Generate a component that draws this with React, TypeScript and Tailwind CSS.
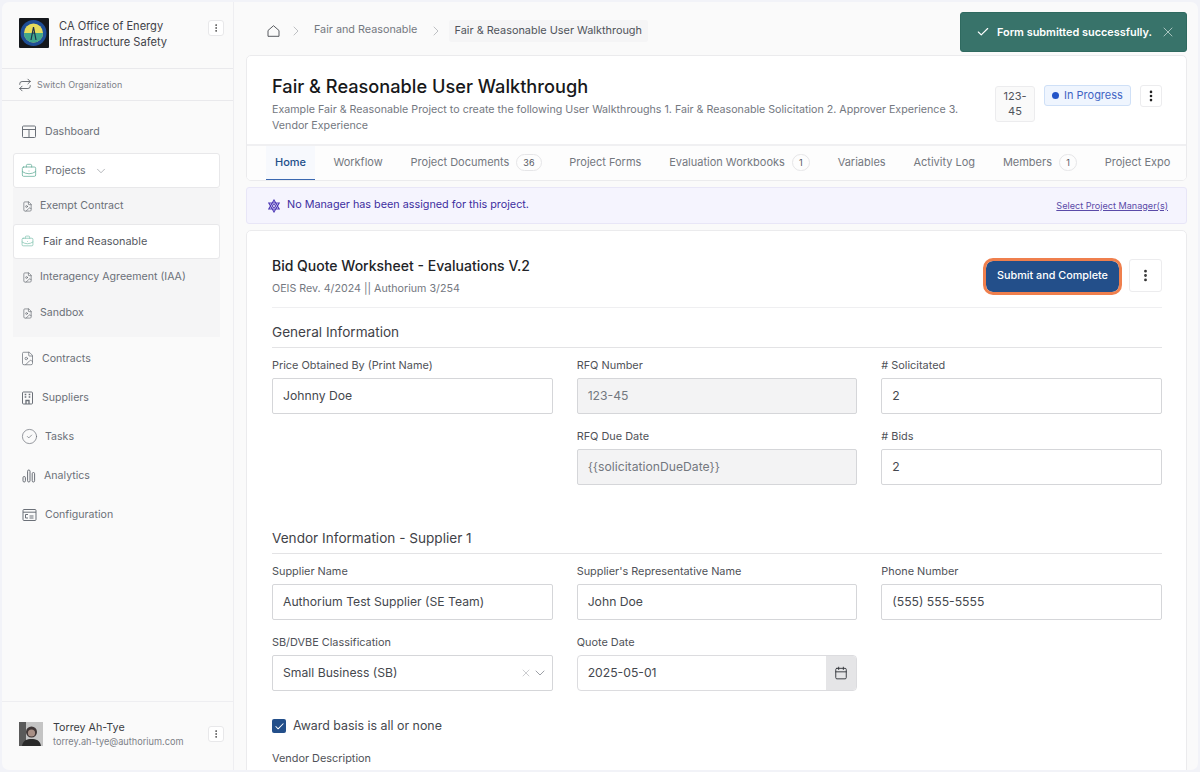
import React from "react";
import {
  BriefcaseBusiness,
  Calendar,
  Check,
  ChevronDown,
  ChevronRight,
  CircleCheck,
  EllipsisVertical,
  FileImage,
  Repeat,
  X,
} from "lucide-react";

const font = { fontFamily: "Inter, 'Liberation Sans', sans-serif" };

const MenuBox = () => (
  <div className="flex h-[16px] w-[16px] items-center justify-center rounded-[3px] border border-[#e8e8ea] bg-white">
    <EllipsisVertical size={10} className="text-[#444]" />
  </div>
);

const DashIcon = () => (
  <svg width="16" height="14" viewBox="0 0 16 14" fill="none" stroke="#6b7078" strokeWidth="1">
    <rect x="2.5" y="1" width="13" height="11.5" rx="1" />
    <path d="M2.5 4.500H15.500M9 4.500V12.500" />
  </svg>
);

const SupplierIcon = () => (
  <svg width="15" height="14" viewBox="0 0 15 14" fill="none" stroke="#6b7078" strokeWidth="1">
    <rect x="2.5" y="1" width="10" height="12" rx="1" />
    <path d="M4.700 3.500H6.300M8.700 3.500H10.300M4.700 6H6.300M8.700 6H10.300M6 13V9.500H9V13" strokeWidth="1.300" />
  </svg>
);

const BarsIcon = () => (
  <svg width="14" height="14" viewBox="0 0 14 14" fill="none" stroke="#6b7078" strokeWidth="1" className="ml-[1.5px]">
    <rect x="1" y="7.500" width="2.400" height="5.500" rx="1.200" />
    <rect x="5.600" y="1" width="2.400" height="12" rx="1.200" />
    <rect x="10.200" y="3.500" width="2.400" height="9.500" rx="1.200" />
  </svg>
);

const ConfigIcon = () => (
  <svg width="15" height="14" viewBox="0 0 15 14" fill="none" stroke="#6b7078" strokeWidth="1" className="ml-[1.5px]">
    <rect x="1" y="1.500" width="13" height="11" rx="1" />
    <path d="M1 4.200H14M3.500 6.500H6M3.500 6.500V10H6M7.500 8H11.500M7.500 10H11.500" />
  </svg>
);

const SubItem = ({ label }: { label: string }) => (
  <div className="flex h-[36px] items-center gap-[7px] pl-[9px] text-[10.6px] text-[#6b7078]">
    <FileImage size={11} strokeWidth={1.4} className="text-[#5f646c]" />
    {label}
  </div>
);

const NavItem = ({ icon, label, gap }: { icon: React.ReactNode; label: string; gap: string }) => (
  <div className={`flex h-[39px] items-center pl-[18px] text-[10.6px] text-[#6b7078] ${gap}`}>
    <span className="flex w-auto items-center">{icon}</span>
    {label}
  </div>
);

const Sidebar = () => (
  <aside className="flex w-[232px] shrink-0 flex-col border-r border-[#eeeef1] bg-[#fafafa]">
    <div className="flex h-[67px] items-start gap-[10px] border-b border-[#e9e9ec] pl-[17px] pr-[9px] pt-[16px]">
      <svg width="30" height="30" viewBox="0 0 30 30" className="shrink-0">
        <rect width="30" height="30" rx="1" fill="#15181c" />
        <circle cx="14.500" cy="15" r="13" fill="#1f4e96" />
        <circle cx="14.500" cy="15" r="9.500" fill="#e6dc5c" />
        <path d="M5 15h19a9.500 9.500 0 0 1-19 0z" fill="#3fa68c" />
        <path d="M12 22l2.500-13 2.500 13M12.800 15h3.400" stroke="#1a2f4a" strokeWidth="1.200" fill="none" />
      </svg>
      <div className="flex-1 pt-[1px] text-[11.1px] leading-[15.5px] text-[#3f4248]">
        CA Office of Energy
        <br />
        Infrastructure Safety
      </div>
      <div className="pt-[2px]">
        <MenuBox />
      </div>
    </div>
    <div className="flex h-[32px] items-center gap-[5px] border-b border-[#e9e9ec] pl-[16px] text-[9px] text-[#7d8188]">
      <Repeat size={14} strokeWidth={1.4} className="text-[#50545b]" />
      Switch Organization
    </div>
    <div className="flex flex-1 flex-col pt-[11px]">
      <NavItem icon={<DashIcon />} label="Dashboard" gap="gap-[9px]" />
      <div className="ml-[11px] mr-[13px] mt-[2px]">
        <div className="flex h-[35px] items-center gap-[8px] rounded-[3px] border border-[#e8e8ea] bg-white pl-[7px] text-[10.6px] text-[#6b7078]">
          <BriefcaseBusiness size={16} strokeWidth={1.1} className="text-[#5ba893]" />
          Projects
          <ChevronDown size={14} strokeWidth={1} className="text-[#808389]" />
        </div>
        <div className="bg-[#f5f5f6]">
          <SubItem label="Exempt Contract" />
          <div className="flex h-[35px] items-center gap-[9px] rounded-[3px] border border-[#e8e8ea] bg-white pl-[7px] text-[10.9px] text-[#55585f]">
            <BriefcaseBusiness size={13} strokeWidth={1.3} className="text-[#7cc0ad]" />
            Fair and Reasonable
          </div>
          <SubItem label="Interagency Agreement (IAA)" />
          <SubItem label="Sandbox" />
          <div className="h-[6px]" />
        </div>
      </div>
      <div className="h-[2px]" />
      <NavItem icon={<FileImage size={15} strokeWidth={1.2} />} label="Contracts" gap="gap-[7px]" />
      <NavItem icon={<SupplierIcon />} label="Suppliers" gap="gap-[7px]" />
      <NavItem icon={<CircleCheck size={17} strokeWidth={1} className="ml-[1px]" />} label="Tasks" gap="gap-[7px]" />
      <NavItem icon={<BarsIcon />} label="Analytics" gap="gap-[8.5px]" />
      <NavItem icon={<ConfigIcon />} label="Configuration" gap="gap-[8.5px]" />
    </div>
    <div className="flex h-[69px] items-center border-t border-[#eeeef1] pb-[4px] pl-[17px] pr-[9px]">
      <svg width="24" height="24" viewBox="0 0 24 24" className="shrink-0">
        <rect width="24" height="24" fill="#c4c4c4" />
        <rect width="7" height="24" fill="#5a5a5a" />
        <circle cx="12.500" cy="10" r="5.500" fill="#3f3636" />
        <circle cx="12.500" cy="11" r="3.600" fill="#a88f85" />
        <path d="M3 24c1-6 5-7 9.500-7s8.500 1 9.500 7z" fill="#2a2a2a" />
      </svg>
      <div className="ml-[10px] flex-1">
        <div className="text-[10.7px] leading-[14px] text-[#3a3d42]">Torrey Ah-Tye</div>
        <div className="text-[9.2px] leading-[13px] text-[#7d8188]">torrey.ah-tye@authorium.com</div>
      </div>
      <MenuBox />
    </div>
  </aside>
);

const Count = ({ n }: { n: string }) => (
  <span className="flex h-[17px] min-w-[18px] items-center justify-center rounded-full border border-[#e6e6e8] px-[6px] text-[9px] text-[#55585f]">
    {n}
  </span>
);

const Tab = ({ label, count, active }: { label: string; count?: string; active?: boolean }) => (
  <div
    className={`flex h-[34px] shrink-0 items-center gap-[7px] whitespace-nowrap border-b px-[9.5px] text-[11px] ${
      active ? "border-[#3a68b0] bg-[#f7f9fd] px-[9px] font-medium text-[#234f8a]" : "border-transparent text-[#74787f]"
    }`}
  >
    {label}
    {count && <Count n={count} />}
  </div>
);

const Field = ({ label, value, disabled }: { label: string; value: string; disabled?: boolean }) => (
  <div>
    <div className="mb-[6px] text-[10.9px] leading-[13px] text-[#4f5258]">{label}</div>
    <div
      className={`flex h-[36px] items-center rounded-[2px] border border-[#d5d6d9] px-[10px] text-[12.2px] ${
        disabled ? "bg-[#f3f3f4] text-[#74787f]" : "bg-white text-[#45484e]"
      }`}
    >
      {value}
    </div>
  </div>
);

const Section = ({ title }: { title: string }) => (
  <div className="border-b border-[#e3e3e5] pb-[5px] text-[13.6px] leading-[19px] text-[#3f4248]">{title}</div>
);

const Main = () => (
  <main className="relative min-w-0 flex-1 overflow-hidden bg-[#fafafa] pl-[12px] pr-[11px]">
    <div className="flex h-[53px] items-center pt-[4px] text-[10.8px] text-[#74787f]">
      <svg width="13" height="12" viewBox="0 0 13 12" fill="none" stroke="#45484e" strokeWidth="0.9" className="ml-[21px]">
        <path d="M1 5.500L6.500 0.700L12 5.500V11.300H1z" strokeLinejoin="round" />
      </svg>
      <ChevronRight size={16} strokeWidth={1} className="ml-[7.5px] text-[#a0a3a8]" />
      <span className="ml-[10.5px]">Fair and Reasonable</span>
      <ChevronRight size={16} strokeWidth={1} className="ml-[10.7px] text-[#a0a3a8]" />
      <span className="ml-[4.5px] flex h-[22px] items-center rounded-[3px] bg-[#f5f5f6] px-[6px] text-[10.9px] text-[#50545b]">
        Fair &amp; Reasonable User Walkthrough
      </span>
    </div>

    <section className="overflow-hidden rounded-[5px] border border-[#ebebed] bg-white">
      <div className="flex h-[90px] items-start border-b-2 border-[#f0f0f2] pl-[25px] pr-[24px] pt-[18px]">
        <div className="w-[700px]">
          <h1 className="text-[18.2px] font-medium leading-[24px] text-[#17181a]">Fair &amp; Reasonable User Walkthrough</h1>
          <p className="mt-[4px] text-[10.7px] leading-[15.5px] text-[#74787f]">
            Example Fair &amp; Reasonable Project to create the following User Walkthroughs 1. Fair &amp; Reasonable
            Solicitation 2. Approver Experience 3. Vendor Experience
          </p>
        </div>
        <div className="ml-auto mt-[11px] flex items-start">
          <div className="mt-[1px] flex h-[36px] w-[40px] items-center justify-center rounded-[3px] border border-[#ececee] bg-[#fafafa] text-center text-[11px] leading-[15.5px] text-[#50545b]">
            123-
            <br />
            45
          </div>
          <div className="ml-[9px] flex h-[21px] w-[87px] items-center gap-[5px] rounded-[3px] border border-[#cfe0f7] bg-[#eff5fe] pl-[7px] text-[11px] text-[#3f64c4]">
            <span className="h-[7px] w-[7px] rounded-full bg-[#2455c8]" />
            In Progress
          </div>
          <div className="ml-[9px] flex h-[22px] w-[22px] items-center justify-center rounded-[3px] border border-[#ececee] bg-white">
            <EllipsisVertical size={14} strokeWidth={2.5} className="text-[#222]" />
          </div>
        </div>
      </div>
      <div className="flex bg-[#fdfdfd] pl-[19px] [&>*+*]:ml-[8.8px]">
        <Tab label="Home" active />
        <Tab label="Workflow" />
        <Tab label="Project Documents" count="36" />
        <Tab label="Project Forms" />
        <Tab label="Evaluation Workbooks" count="1" />
        <Tab label="Variables" />
        <Tab label="Activity Log" />
        <Tab label="Members" count="1" />
        <Tab label="Project Expo" />
      </div>
    </section>

    <div className="mt-[6px] flex h-[37px] items-center rounded-[3px] border border-[#e8e6f7] bg-[#f5f4fe] pl-[20px] pr-[18px] text-[#3d2ea0]">
      <svg width="14" height="14" viewBox="0 0 14 14" fill="none" stroke="#4c37b5" strokeWidth="1.100">
        <path d="M7 1L12.200 10H1.800zM7 13L1.800 4H12.200z" />
        <circle cx="7" cy="7" r="1.500" />
      </svg>
      <span className="ml-[6px] text-[10.8px]">No Manager has been assigned for this project.</span>
      <span className="ml-auto text-[9.1px] text-[#5a4aa8] underline">Select Project Manager(s)</span>
    </div>

    <section className="mt-[6px] rounded-[5px] border border-[#ebebed] bg-white pb-[40px] pl-[25px] pr-[24px]">
      <div className="flex h-[77px] items-start border-b border-[#efeff1] pt-[26px]">
        <div>
          <h2 className="text-[14px] font-medium leading-[18px] text-[#222428]">Bid Quote Worksheet - Evaluations V.2</h2>
          <p className="mt-[7px] text-[10.7px] leading-[13px] text-[#74787f]">OEIS Rev. 4/2024 || Authorium 3/254</p>
        </div>
        <div className="ml-auto mt-[2px] flex items-center">
          <button className="mt-[1px] flex h-[31px] w-[133px] items-center justify-center rounded-[7px] bg-[#234f8a] text-[10.8px] font-medium text-white outline-[3.5px] outline-[#ef7f4d]">
            Submit and Complete
          </button>
          <div className="ml-[10px] flex h-[33px] w-[33px] items-center justify-center rounded-[3px] border border-[#ececee] bg-white">
            <EllipsisVertical size={15} strokeWidth={2.5} className="text-[#333]" />
          </div>
        </div>
      </div>

      <div className="mt-[15px]">
        <Section title="General Information" />
      </div>
      <div className="mt-[11px] grid grid-cols-3 gap-x-[24px] gap-y-[16px]">
        <Field label="Price Obtained By (Print Name)" value="Johnny Doe" />
        <Field label="RFQ Number" value="123-45" disabled />
        <Field label="# Solicitated" value="2" />
        <div />
        <Field label="RFQ Due Date" value="{{solicitationDueDate}}" disabled />
        <Field label="# Bids" value="2" />
      </div>

      <div className="mt-[44px]">
        <Section title="Vendor Information - Supplier 1" />
      </div>
      <div className="mt-[11px] grid grid-cols-3 gap-x-[24px] gap-y-[16px]">
        <Field label="Supplier Name" value="Authorium Test Supplier (SE Team)" />
        <Field label="Supplier's Representative Name" value="John Doe" />
        <Field label="Phone Number" value="(555) 555-5555" />
        <div>
          <div className="mb-[6px] text-[10.9px] leading-[13px] text-[#4f5258]">SB/DVBE Classification</div>
          <div className="flex h-[36px] items-center rounded-[2px] border border-[#d5d6d9] bg-white pl-[10px] pr-[4px] text-[12.2px] text-[#45484e]">
            Small Business (SB)
            <X size={12} strokeWidth={1} className="ml-auto text-[#9a9da2]" />
            <ChevronDown size={16} strokeWidth={1} className="text-[#6b7078]" />
          </div>
        </div>
        <div>
          <div className="mb-[6px] text-[10.9px] leading-[13px] text-[#4f5258]">Quote Date</div>
          <div className="flex h-[36px] overflow-hidden rounded-[4px] border border-[#dcdcdf] bg-white text-[12.2px] text-[#45484e]">
            <div className="flex flex-1 items-center px-[10px]">2025-05-01</div>
            <div className="flex w-[30px] items-center justify-center bg-[#e5e5e7]">
              <Calendar size={14} strokeWidth={1.6} className="text-[#33363b]" />
            </div>
          </div>
        </div>
      </div>

      <div className="mt-[26px] flex items-center gap-[7px] text-[12.4px] text-[#45484e]">
        <span className="flex h-[14px] w-[14px] items-center justify-center rounded-[2px] bg-[#234f8a]">
          <Check size={11} strokeWidth={2.2} className="text-white" />
        </span>
        Award basis is all or none
      </div>
      <div className="mt-[16px] text-[10.9px] leading-[13px] text-[#4f5258]">Vendor Description</div>
      <div className="mt-[6px] h-[40px] border border-[#d5d6d9] bg-white" />
    </section>

    <div className="absolute right-[11px] top-[10px] flex h-[40px] w-[227px] items-center rounded-[3px] border border-[#2f6a60] bg-[#38736a] pl-[15px] text-white">
      <Check size={14} strokeWidth={2} />
      <span className="ml-[7px] text-[10.9px] font-semibold">Form submitted successfully.</span>
      <X size={16} strokeWidth={1.2} className="ml-[8px] text-[#c5d8d4]" />
    </div>
  </main>
);

export default function App() {
  return (
    <div style={font} className="h-[772px] w-full overflow-hidden bg-[#f2f3f8] p-[2px]">
      <div className="flex h-[768px] overflow-hidden rounded-[7px]">
        <Sidebar />
        <Main />
      </div>
    </div>
  );
}
